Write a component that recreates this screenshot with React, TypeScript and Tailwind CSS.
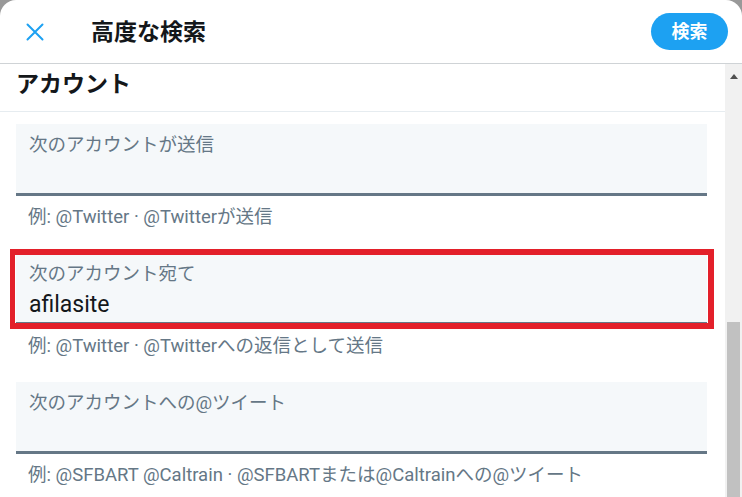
const font = { fontFamily: 'Roboto, "Noto Sans CJK JP", sans-serif' };

type FieldProps = {
  label: string;
  hint: string;
  value?: string;
  marked?: boolean;
};

const Field = ({ label, hint, value, marked }: FieldProps) => {
  return (
    <div>
      <div className="relative">
        <div className="h-[72px] bg-[#f5f8fa] border-b-[3px] border-[#657786] pl-[13px] pt-[9px]">
          <div className="text-[18.5px] leading-[24px] text-[#657786]">{label}</div>
          {value && <div className="mt-[4px] text-[23px] leading-[30px] text-[#14171a]">{value}</div>}
        </div>
        {marked && (
          <div className="absolute -left-[6px] -right-[7px] -top-[4px] -bottom-[4px] border-[6px] border-l-[5px] border-[#e3202a]" />
        )}
      </div>
      <div className="h-[57px] pl-[12px] pt-[9px] text-[18.5px] leading-[24px] text-[#657786] whitespace-nowrap">
        {hint}
      </div>
    </div>
  );
};

export default function App() {
  return (
    <div className="w-[742px] h-[497px] bg-[#999] overflow-hidden" style={font}>
      <div className="h-full bg-white rounded-t-[16px] flex flex-col">
        <header className="h-[64px] shrink-0 flex items-center border-b border-[#cfd3d6] pl-[26px] pr-[14px]">
          <svg width="18" height="18" viewBox="0 0 18 18" className="shrink-0">
            <path d="M1.5 1.5 L16.5 16.5 M16.5 1.5 L1.5 16.5" stroke="#1da1f2" strokeWidth="2" strokeLinecap="round" />
          </svg>
          <h1 className="ml-[47px] mt-[2px] text-[23px] leading-[30px] font-bold text-[#14171a]">高度な検索</h1>
          <button className="ml-auto w-[77px] h-[37px] rounded-full bg-[#1da1f2] text-white font-bold text-[18px] leading-none">
            検索
          </button>
        </header>

        <div className="flex-1 flex min-h-0">
          <main className="flex-1 min-w-0">
            <div className="h-[48px] border-b border-[#e6ecf0] pl-4 pt-[5px]">
              <h2 className="text-[23px] leading-[32px] font-bold text-[#14171a]">アカウント</h2>
            </div>
            <div className="pl-4 pr-[18px] pt-[12px]">
              <Field label="次のアカウントが送信" hint="例: @Twitter · @Twitterが送信" />
              <Field label="次のアカウント宛て" value="afilasite" hint="例: @Twitter · @Twitterへの返信として送信" marked />
              <Field
                label="次のアカウントへの@ツイート"
                hint="例: @SFBART @Caltrain · @SFBARTまたは@Caltrainへの@ツイート"
              />
            </div>
          </main>

          <div className="w-[17px] shrink-0 bg-[#f1f1f1] flex flex-col">
            <div className="h-[24px] flex items-center justify-center">
              <svg width="8" height="5" viewBox="0 0 8 5">
                <path d="M4 0 L8 5 L0 5 Z" fill="#505050" />
              </svg>
            </div>
            <div className="h-[234px]" />
            <div className="flex-1 mx-[2px] bg-[#c1c1c1]" />
          </div>
        </div>
      </div>
    </div>
  );
}
